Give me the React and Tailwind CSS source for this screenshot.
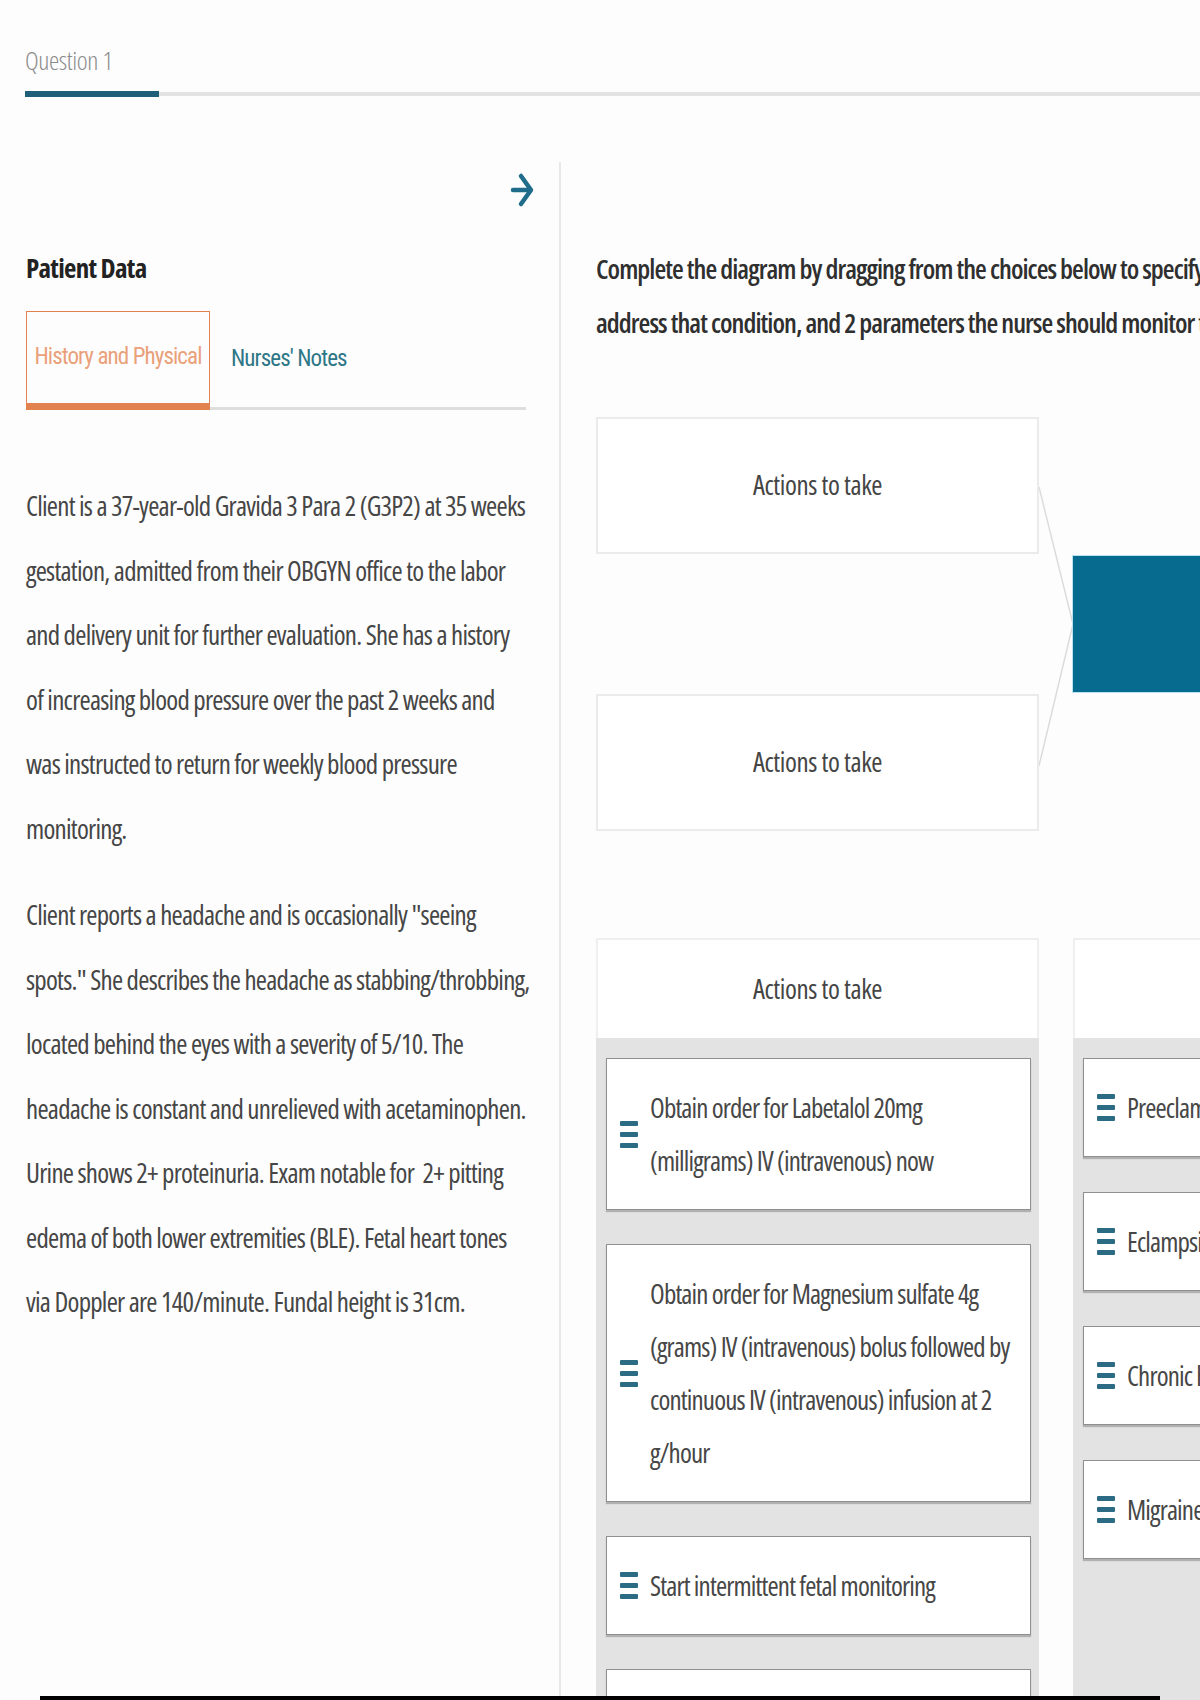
function Handle() {
  return (
    <div className="flex flex-col gap-[6px] w-[18px] shrink-0">
      <div className="h-[5px] rounded-[1px] bg-[#2b6c84]" />
      <div className="h-[5px] rounded-[1px] bg-[#2b6c84]" />
      <div className="h-[5px] rounded-[1px] bg-[#2b6c84]" />
    </div>
  );
}

function Card({ children, minH }) {
  return (
    <div className={"bg-white border-[1.5px] border-[#8f8f8f] shadow-[0_2px_1px_rgba(0,0,0,0.22)] flex items-center pl-[13px] pr-[10px] py-[22px] " + (minH ? "min-h-[120px]" : "")}>
      {children ? (
        <>
          <Handle />
          <div className="ml-[12px] text-[27px] leading-[53px] tracking-[-0.85px] text-[#474747] whitespace-nowrap">
            {children}
          </div>
        </>
      ) : null}
    </div>
  );
}

function ActionBox() {
  return (
    <div className="h-[137px] bg-white border-2 border-[#ebebeb] flex items-center justify-center text-[27px] tracking-[-0.4px] text-[#454545]">
      Actions to take
    </div>
  );
}

export default function App() {
  return (
    <div className="relative w-[1200px] h-[1700px] overflow-hidden bg-[#fdfdfd] font-['Open_Sans',sans-serif] [font-stretch:75%] text-[#444]">
      {/* header */}
      <div className="pt-[43px] pl-[25px]">
        <div className="text-[26px] leading-[34px] font-light tracking-[-0.4px] text-[#8c8c8c]">Question 1</div>
        <div className="mt-[14px] flex items-center">
          <div className="w-[134px] h-[6px] bg-[#1f5f78]" />
          <div className="flex-1 h-[4px] bg-[#e3e3e3]" />
        </div>
      </div>

      {/* main */}
      <div className="mt-[65px] flex">
        {/* left */}
        <div className="w-[561px] shrink-0 border-r-2 border-[#e8e8e8] pl-[26px] pr-[34px] h-[1540px]">
          <div className="flex justify-end h-[48px] pt-[8px] -mr-[9px]">
            <svg width="24" height="40" viewBox="0 0 24 40" fill="none" stroke="#1f6d8a" strokeWidth="4.5" strokeLinecap="round" strokeLinejoin="round">
              <path d="M3 20 H20" />
              <path d="M11 6 L21 20 L11 34" />
            </svg>
          </div>
          <div className="mt-[40px] text-[27px] leading-[36px] font-bold tracking-[-0.7px] text-[#222]">Patient Data</div>
          <div className="mt-[25px] flex items-end border-b-[3px] border-[#dedede] w-[500px]">
            <div className="-mb-[3px] w-[184px] h-[99px] border-[1.5px] border-b-[7px] border-[#e2834f] flex items-center justify-center font-['Roboto',sans-serif] text-[23px] tracking-[-0.9px] text-[#eaa079] whitespace-nowrap">
              History and Physical
            </div>
            <div className="ml-[21px] h-[96px] flex items-center font-['Roboto',sans-serif] text-[23px] tracking-[-0.9px] text-[#2d7787] whitespace-nowrap">
              Nurses' Notes
            </div>
          </div>
          <p className="mt-[64px] text-[27px] leading-[64.5px] tracking-[-0.75px] text-[#464646] whitespace-nowrap">
            Client is a 37-year-old Gravida 3 Para 2 (G3P2) at 35 weeks<br />
            gestation, admitted from their OBGYN office to the labor<br />
            and delivery unit for further evaluation. She has a history<br />
            of increasing blood pressure over the past 2 weeks and<br />
            was instructed to return for weekly blood pressure<br />
            monitoring.
          </p>
          <p className="mt-[22px] text-[27px] leading-[64.5px] tracking-[-0.75px] text-[#464646] whitespace-nowrap">
            Client reports a headache and is occasionally "seeing<br />
            spots." She describes the headache as stabbing/throbbing,<br />
            located behind the eyes with a severity of 5/10. The<br />
            headache is constant and unrelieved with acetaminophen.<br />
            Urine shows 2+ proteinuria. Exam notable for&nbsp; 2+ pitting<br />
            edema of both lower extremities (BLE). Fetal heart tones<br />
            via Doppler are 140/minute. Fundal height is 31cm.
          </p>
        </div>

        {/* right */}
        <div className="pl-[35px] pt-[80px] shrink-0 w-[1000px]">
          <p className="text-[27px] leading-[54px] font-semibold tracking-[-0.95px] text-[#2f2f2f] whitespace-nowrap">
            Complete the diagram by dragging from the choices below to specify the condition the client is most likely experiencing, 2 actions the nurse should take to<br />
            address that condition, and 2 parameters the nurse should monitor to assess the client's progress.
          </p>

          {/* diagram */}
          <div className="mt-[67px] flex">
            <div className="w-[443px] flex flex-col gap-[140px]">
              <ActionBox />
              <ActionBox />
            </div>
            <svg width="34" height="414" viewBox="0 0 34 414" className="shrink-0">
              <path d="M0 70 L34 207 L0 349" fill="none" stroke="#dcdcdc" strokeWidth="1.5" />
            </svg>
            <div className="self-center w-[300px] h-[136px] bg-[#076b8f] ring-1 ring-[#b9e3ef]" />
          </div>

          {/* choice columns */}
          <div className="mt-[107px] flex gap-[34px] items-start">
            <div className="w-[443px] shrink-0">
              <div className="h-[100px] bg-white border-2 border-b-0 border-[#efefef] flex items-center justify-center text-[27px] tracking-[-0.4px] text-[#454545]">
                Actions to take
              </div>
              <div className="bg-[#e3e3e3] h-[700px] pt-[20px] pl-[10px] pr-[8px] flex flex-col gap-[34px]">
                <Card>
                  Obtain order for Labetalol 20mg<br />
                  (milligrams) IV (intravenous) now
                </Card>
                <Card>
                  Obtain order for Magnesium sulfate 4g<br />
                  (grams) IV (intravenous) bolus followed by<br />
                  continuous IV (intravenous) infusion at 2<br />
                  g/hour
                </Card>
                <Card>Start intermittent fetal monitoring</Card>
                <Card minH />
              </div>
            </div>
            <div className="w-[443px] shrink-0">
              <div className="h-[100px] bg-white border-2 border-b-0 border-[#efefef]" />
              <div className="bg-[#e3e3e3] h-[700px] pt-[20px] pl-[10px] pr-[8px] flex flex-col gap-[35px]">
                <Card>Preeclampsia</Card>
                <Card>Eclampsia</Card>
                <Card>Chronic hypertension</Card>
                <Card>Migraine</Card>
              </div>
            </div>
          </div>
        </div>
      </div>

      {/* bottom bar */}
      <div className="absolute left-[40px] bottom-0 w-[1120px] h-[4px] bg-black" />
    </div>
  );
}
